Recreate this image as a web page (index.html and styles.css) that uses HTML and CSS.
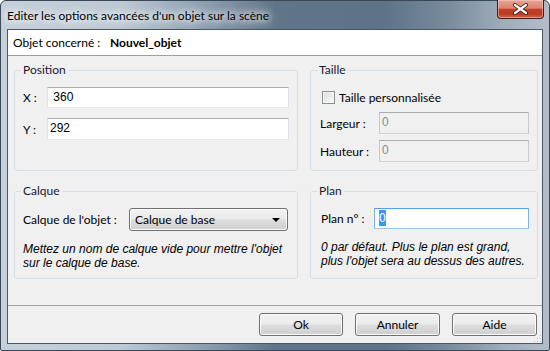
FILE: index.html
```html
<!DOCTYPE html>
<html>

<head>
    <title>Editer les options avancées</title>
    <link rel="stylesheet" href="styles.css">
</head>

<body>
    <div class="fenetre">
        <div class="barreTitre">
            <span class="titre">Editer les options avancées d'un objet sur la scène</span>
            <div class="fermer">
                <svg width="47" height="19" viewBox="0 0 47 19">
                    <path d="M18 5 L29 13 M29 5 L18 13" stroke="#3b1410" stroke-width="4" stroke-linecap="round" fill="none" />
                    <path d="M18 5 L29 13 M29 5 L18 13" stroke="#ffffff" stroke-width="2.2" stroke-linecap="round" fill="none" />
                </svg>
            </div>
        </div>

        <div class="client">
            <div class="entete">
                <span class="enteteLabel">Objet concerné :</span>
                <span class="enteteNom">Nouvel_objet</span>
            </div>

            <div class="zoneGroupes">
                <fieldset class="groupe">
                    <legend>Position</legend>
                    <div class="contenu contenuPosition">
                        <div class="ligne">
                            <span class="label labelXY">X :</span>
                            <div class="champ champHaut21">&nbsp;360</div>
                        </div>
                        <div class="ligne">
                            <span class="label labelXY">Y :</span>
                            <div class="champ champHaut22">292</div>
                        </div>
                    </div>
                </fieldset>

                <fieldset class="groupe">
                    <legend>Taille</legend>
                    <div class="contenu contenuTaille">
                        <div class="ligne ligneCase">
                            <div class="caseACocher"></div>
                            <span class="label">Taille personnalisée</span>
                        </div>
                        <div class="ligne">
                            <span class="label labelTaille">Largeur :</span>
                            <div class="champ champInactif">0</div>
                        </div>
                        <div class="ligne">
                            <span class="label labelTaille">Hauteur :</span>
                            <div class="champ champInactif">0</div>
                        </div>
                    </div>
                </fieldset>

                <fieldset class="groupe">
                    <legend>Calque</legend>
                    <div class="contenu contenuCalque">
                        <div class="ligne">
                            <span class="label labelCalque">Calque de l'objet :</span>
                            <div class="liste">
                                <span>Calque de base</span>
                                <span class="fleche"></span>
                            </div>
                        </div>
                        <p class="aide">Mettez un nom de calque vide pour mettre l'objet<br>sur le calque de base.</p>
                    </div>
                </fieldset>

                <fieldset class="groupe">
                    <legend>Plan</legend>
                    <div class="contenu contenuPlan">
                        <div class="ligne">
                            <span class="label labelPlan">Plan n° :</span>
                            <div class="champ champFocus"><span class="selection">0</span></div>
                        </div>
                        <p class="aide">0 par défaut. Plus le plan est grand,<br>plus l'objet sera au dessus des autres.</p>
                    </div>
                </fieldset>
            </div>

            <div class="pied">
                <button type="button" class="bouton boutonOk">Ok</button>
                <button type="button" class="bouton">Annuler</button>
                <button type="button" class="bouton">Aide</button>
                <svg class="poignee" width="9" height="9" viewBox="0 0 9 9">
                    <rect x="7" y="1" width="1" height="1" fill="#b8b8b8" />
                    <rect x="4" y="4" width="1" height="1" fill="#b8b8b8" />
                    <rect x="7" y="4" width="1" height="1" fill="#b8b8b8" />
                    <rect x="1" y="7" width="1" height="1" fill="#b8b8b8" />
                    <rect x="4" y="7" width="1" height="1" fill="#b8b8b8" />
                    <rect x="7" y="7" width="1" height="1" fill="#b8b8b8" />
                </svg>
            </div>
        </div>
    </div>
</body>

</html>
```

FILE: styles.css
```css
* {
    box-sizing: border-box;
}

html,
body {
    margin: 0px;
    padding: 0px;
    background-color: #ffffff;
}

body {
    font-family: "Lato", "Liberation Sans", sans-serif;
    font-size: 12px;
    color: #000000;
}

.fenetre {
    width: 550px;
    height: 351px;
    display: flex;
    flex-direction: column;
    padding: 0px 6px 6px 6px;
    border: 1px solid #3a4756;
    border-radius: 6px 6px 2px 2px;
    background: linear-gradient(90deg, #c6d0da 0%, #bcc8d3 22%, #8a9cae 38%, #60758a 50%, #5e7388 70%, #7a8c9e 82%, #a1aebb 92%, #b2bdc8 100%);
}

.barreTitre {
    height: 28px;
    display: flex;
    align-items: flex-start;
    margin-right: -1px;
}

.titre {
    margin-top: 7px;
    margin-left: 0px;
    line-height: 16px;
    color: #000000;
    text-shadow: 0 0 6px #ffffff, 0 0 10px #ffffff, 0 0 14px #e8eef4;
}

.fermer {
    margin-left: auto;
    width: 47px;
    height: 19px;
    margin-top: -1px;
    border: 1px solid #3e2020;
    border-top: none;
    border-radius: 0px 0px 4px 4px;
    background: linear-gradient(180deg, #e6a597 0%, #d98570 45%, #c1412a 52%, #bd3a24 78%, #d2674e 100%);
    box-shadow: inset 0 0 0 1px rgba(255, 220, 210, 0.45);
}

.fermer svg {
    display: block;
    margin-left: -1px;
}

.client {
    flex: 1;
    display: flex;
    flex-direction: column;
    border: 1px solid #4a5868;
    background-color: #f0f0f0;
}

.entete {
    height: 26px;
    background-color: #ffffff;
    border-bottom: 1px solid #a0a0a0;
    display: flex;
    align-items: center;
    padding-left: 5px;
}

.enteteLabel {
    width: 97px;
}

.enteteNom {
    font-weight: bold;
}

.zoneGroupes {
    flex: 1;
    display: grid;
    grid-template-columns: 284px 228px;
    grid-template-rows: 109px 96px;
    column-gap: 12px;
    row-gap: 12px;
    padding: 6px 6px;
}

.groupe {
    margin: 0px;
    padding: 0px;
    min-width: 0px;
    border: 1px solid #d5dfe5;
    border-radius: 3px;
}

.groupe legend {
    margin-left: 6px;
    padding: 0px 2px;
    line-height: 16px;
    color: #1a1630;
}

.ligne {
    display: flex;
    align-items: center;
}

.label {
    white-space: nowrap;
}

.champ {
    flex: 1;
    height: 21px;
    padding: 0px 2px;
    line-height: 19px;
    font-family: "Liberation Sans", sans-serif;
    background-color: #ffffff;
    border: 1px solid;
    border-color: #abadb3 #dbdfe6 #e3e9ef #e2e3ea;
}

.champHaut22 {
    height: 22px;
}

.champInactif {
    height: 22px;
    color: #8a8a8a;
    background-color: #f0f0f0;
    border-color: #a9abad #c6c9cc #cfd2d4 #c6c9cc;
}

.champFocus {
    border-color: #569de5 #7eb4ea #a2c8ef #7eb4ea;
    padding-left: 4px;
}

.selection {
    background-color: #3399ff;
    color: #ffffff;
    padding: 1px 0px;
}

.contenuPosition {
    padding: 9px 8px 0px 8px;
}

.contenuPosition .ligne+.ligne {
    margin-top: 10px;
}

.labelXY {
    width: 24px;
}

.contenuTaille {
    padding: 10px 8px 0px 9px;
}

.ligneCase {
    height: 18px;
    padding-left: 2px;
    margin-bottom: 6px;
}

.caseACocher {
    width: 13px;
    height: 13px;
    margin-right: 4px;
    border: 1px solid #8e8f8f;
    background: linear-gradient(135deg, #d9dbdd 0%, #f4f4f4 80%, #fbfbfb 100%);
    box-shadow: inset 0 0 0 1px #f5f5f5;
}

.contenuTaille .ligne+.ligne+.ligne {
    margin-top: 6px;
}

.labelTaille {
    width: 59px;
}

.contenuCalque {
    padding: 9px 9px 0px 8px;
}

.labelCalque {
    width: 106px;
}

.liste {
    flex: 1;
    height: 23px;
    display: flex;
    align-items: center;
    padding: 0px 7px 0px 5px;
    border: 1px solid #707070;
    border-radius: 3px;
    background: linear-gradient(180deg, #f2f2f2 0%, #ebebeb 48%, #dddddd 52%, #cfcfcf 100%);
    box-shadow: inset 0 0 0 1px #fcfcfc;
}

.fleche {
    margin-left: auto;
    width: 0px;
    height: 0px;
    border-left: 4px solid transparent;
    border-right: 4px solid transparent;
    border-top: 4px solid #000000;
}

.aide {
    margin: 11px 0px 0px 0px;
    font-family: "Liberation Sans", sans-serif;
    font-style: italic;
    line-height: 14px;
}

.contenuPlan {
    padding: 9px 8px 0px 10px;
}

.labelPlan {
    width: 53px;
}

.pied {
    position: relative;
    height: 38px;
    border-top: 1px solid #a0a0a0;
    display: flex;
    justify-content: flex-end;
    align-items: flex-start;
    padding: 7px 5px 0px 0px;
}

.bouton {
    width: 85px;
    height: 23px;
    margin: 0px 0px 0px 12px;
    padding: 0px;
    font-family: "Lato", "Liberation Sans", sans-serif;
    font-size: 12px;
    color: #000000;
    border: 1px solid #707070;
    border-radius: 3px;
    background: linear-gradient(180deg, #f2f2f2 0%, #ebebeb 48%, #dddddd 52%, #cfcfcf 100%);
    box-shadow: inset 0 0 0 1px #fcfcfc;
}

.boutonOk {
    width: 84px;
}

.poignee {
    position: absolute;
    right: 0px;
    bottom: 0px;
}
```
